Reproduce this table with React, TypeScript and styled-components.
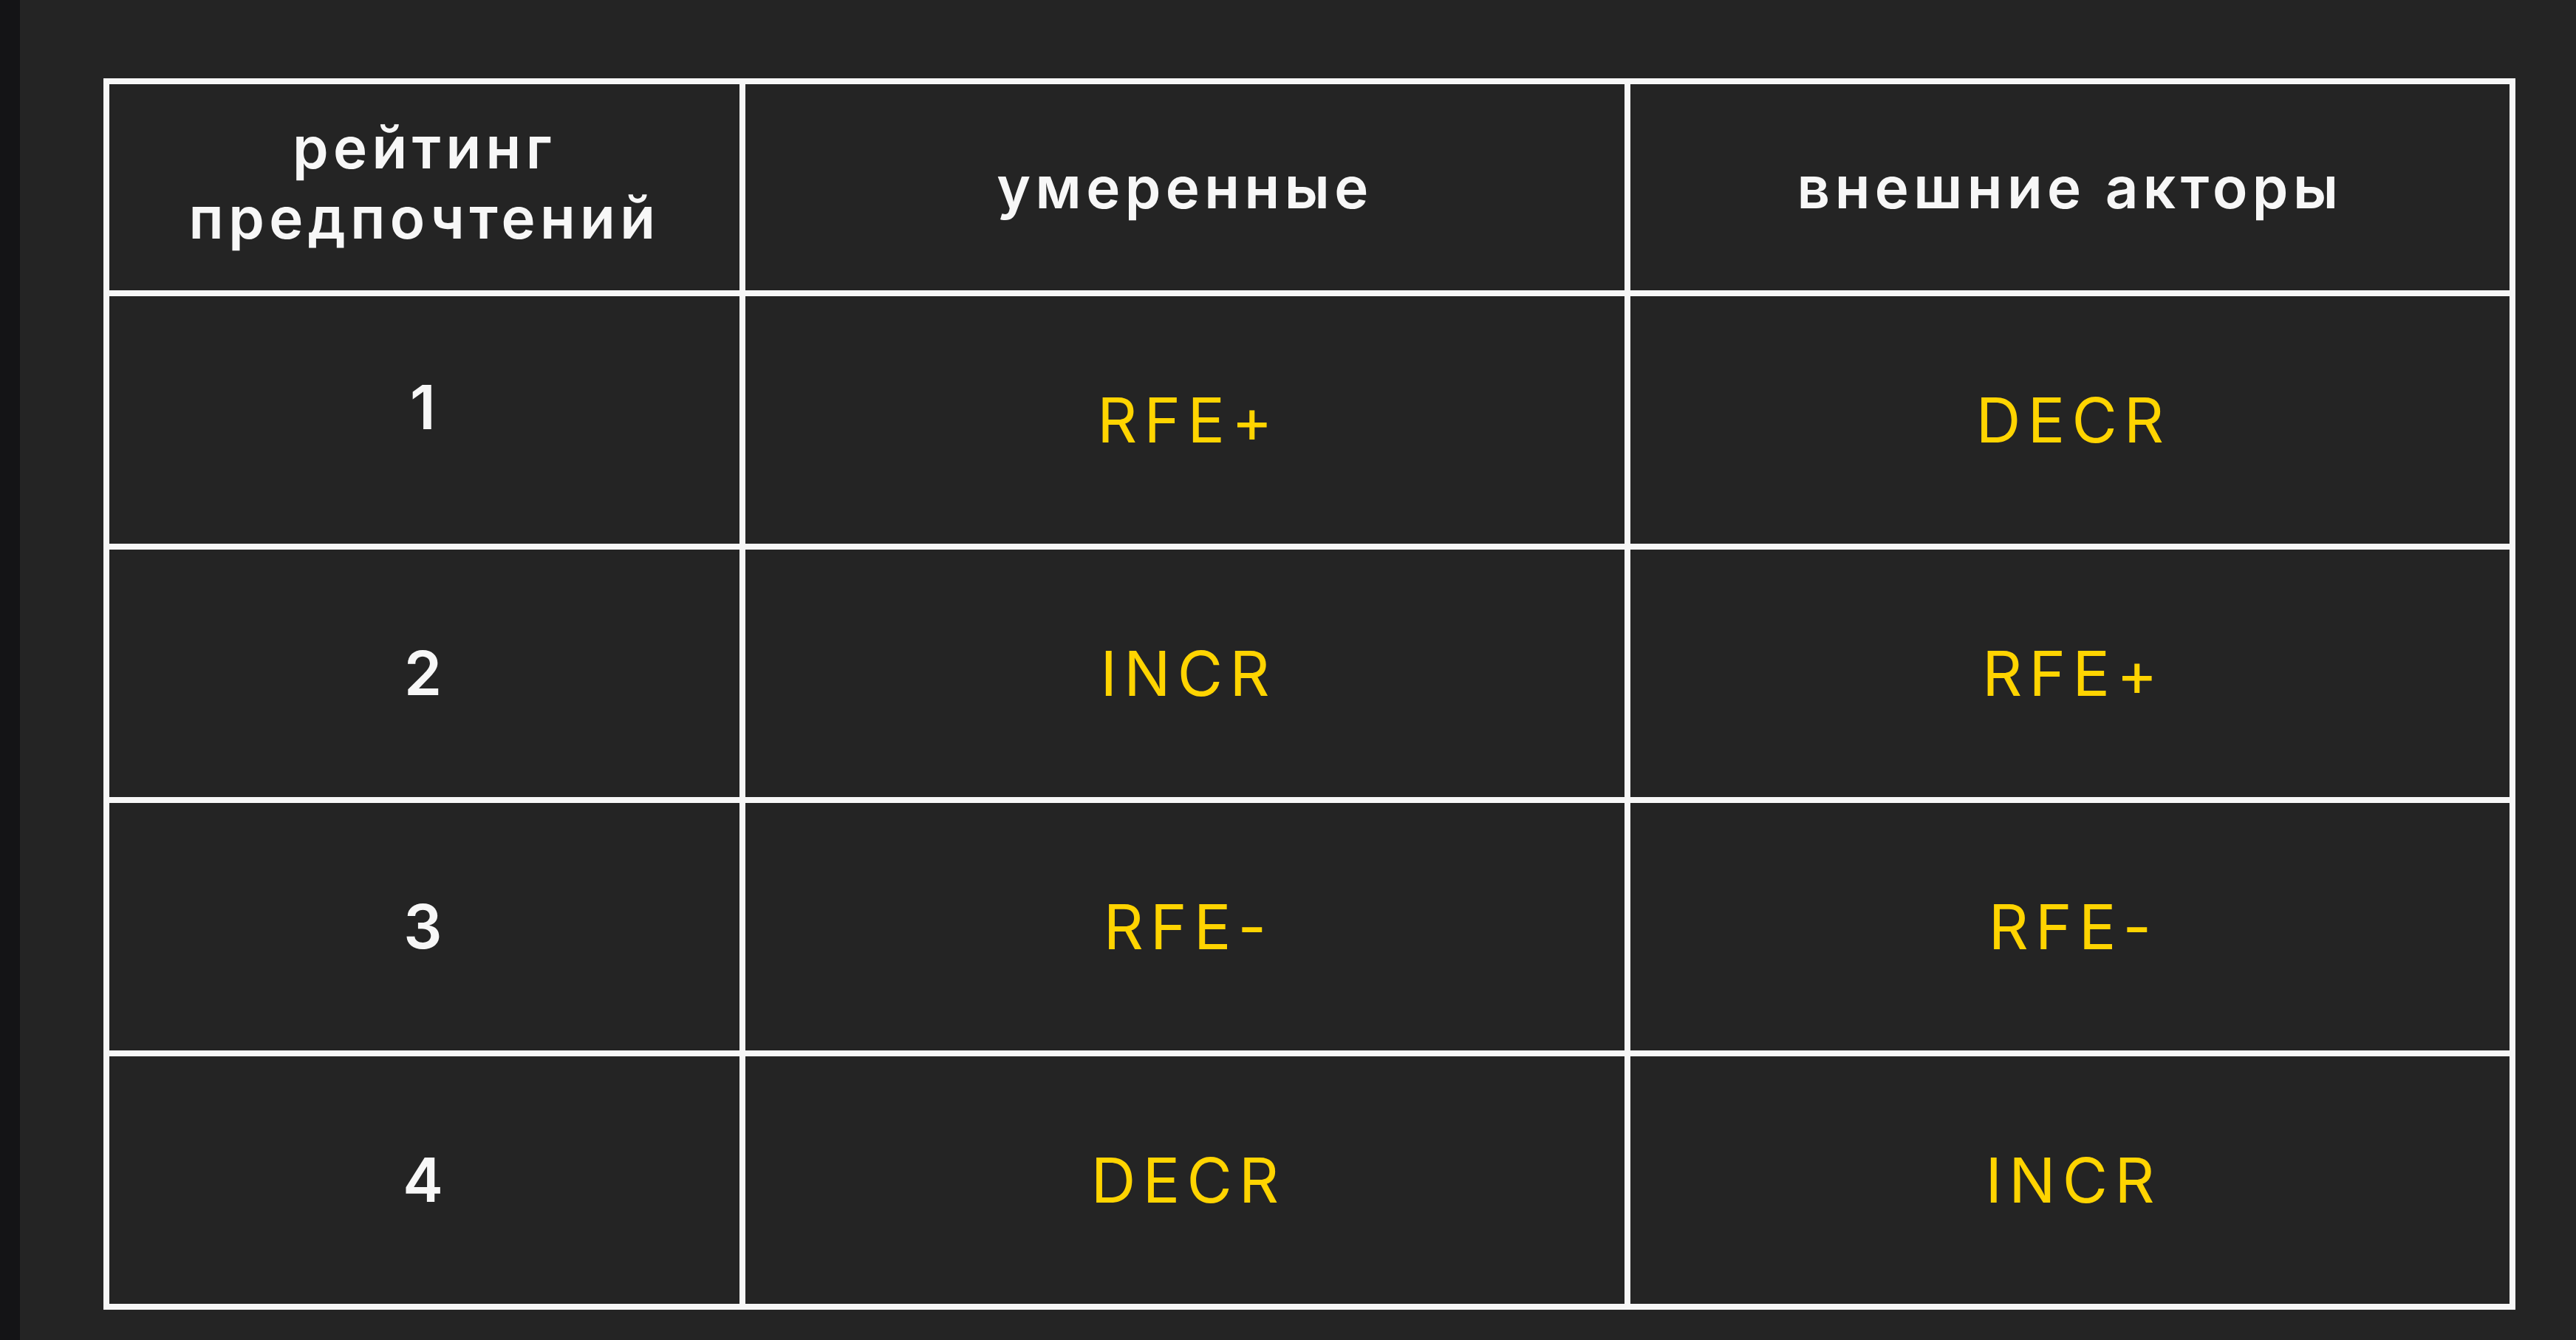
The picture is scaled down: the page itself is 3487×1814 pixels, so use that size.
import styled, { createGlobalStyle } from "styled-components";

const GlobalStyle = createGlobalStyle`
  html, body {
    margin: 0;
    padding: 0;
    background: #242424;
  }
  body {
    font-family: Inter, "Noto Sans", sans-serif;
  }
`;

const SPage = styled.div`
  display: flex;
  width: 3487px;
  height: 1814px;
  background: #242424;
  overflow: hidden;
`;

const SSideEdge = styled.div`
  width: 27px;
  flex: none;
  background: #141416;
`;

const SMain = styled.main`
  flex: 1;
  padding: 106px 0 0 113px;
`;

const STable = styled.div`
  display: grid;
  grid-template-columns: 853px 1190px 1190px;
  grid-template-rows: 279px repeat(4, 335px);
  gap: 8px;
  padding: 8px;
  width: max-content;
  background: #f7f7f7;
`;

const SCell = styled.div<{ $lift?: number }>`
  display: flex;
  align-items: center;
  justify-content: center;
  text-align: center;
  background: #242424;
  padding-bottom: ${(p) => (p.$lift ? `${p.$lift}px` : "0")};
`;

const SHeadText = styled.span`
  color: #f7f7f7;
  font-size: 78px;
  font-weight: 600;
  line-height: 95px;
  letter-spacing: 0.082em;
`;

const SRank = styled.span`
  color: #f7f7f7;
  font-size: 82px;
  font-weight: 600;
  letter-spacing: 0.05em;
`;

const SValue = styled.span`
  color: #ffd400;
  font-size: 84px;
  font-weight: 400;
  letter-spacing: 0.11em;
  margin-right: -0.11em;
`;

const rows: [string, string, string][] = [
  ["1", "RFE+", "DECR"],
  ["2", "INCR", "RFE+"],
  ["3", "RFE-", "RFE-"],
  ["4", "DECR", "INCR"],
];

export default function App() {
  return (
    <>
      <GlobalStyle />
      <SPage>
        <SSideEdge />
        <SMain>
          <STable>
            <SCell $lift={14}>
              <SHeadText>
                рейтинг
                <br />
                предпочтений
              </SHeadText>
            </SCell>
            <SCell>
              <SHeadText>умеренные</SHeadText>
            </SCell>
            <SCell>
              <SHeadText>внешние акторы</SHeadText>
            </SCell>
            {rows.map(([rank, moderate, external], i) => (
              <>
                <SCell key={`r${i}`} $lift={i === 0 ? 34 : 0}>
                  <SRank>{rank}</SRank>
                </SCell>
                <SCell key={`m${i}`}>
                  <SValue>{moderate}</SValue>
                </SCell>
                <SCell key={`e${i}`}>
                  <SValue>{external}</SValue>
                </SCell>
              </>
            ))}
          </STable>
        </SMain>
      </SPage>
    </>
  );
}
